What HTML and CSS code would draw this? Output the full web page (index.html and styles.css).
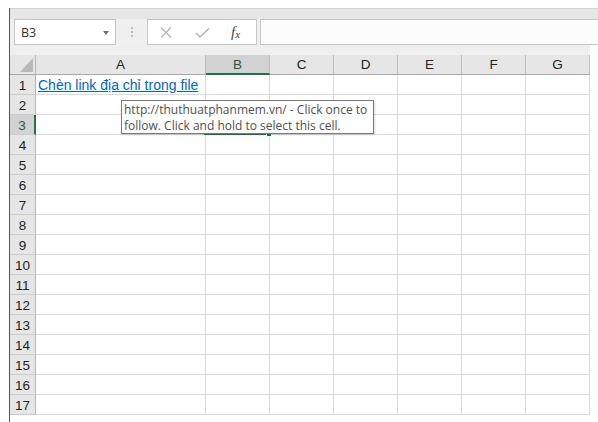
FILE: index.html
```html
<!DOCTYPE html>
<html>
<head>
<meta charset="utf-8">
<link rel="stylesheet" href="styles.css">
</head>
<body>
<div class="window">
  <div class="strip"></div>
  <div class="fbar">
    <div class="namebox"><span class="ref">B3</span><span class="caret"></span></div>
    <div class="grip"><i></i><i></i><i></i></div>
    <div class="fxbox">
      <svg class="ico-x" width="12" height="11" viewBox="0 0 12 11"><path d="M1 0.5 L11 10.5 M11 0.5 L1 10.5" stroke="#b3b3b3" stroke-width="1.3" fill="none"/></svg>
      <svg class="ico-ok" width="15" height="10" viewBox="0 0 15 10"><path d="M1 5 L5 9 L14 0.5" stroke="#b3b3b3" stroke-width="1.4" fill="none"/></svg>
      <span class="fx">f<span class="sub">x</span></span>
    </div>
    <div class="input"></div>
  </div>
  <div class="sheet">
    <div class="band"></div>
    <div class="row head">
      <div class="corner"><svg width="13" height="14" viewBox="0 0 13 14"><path d="M13 0 L13 14 L0 14 Z" fill="#b9b9b9"/></svg></div>
      <div class="ch">A</div><div class="ch on">B</div><div class="ch">C</div><div class="ch">D</div><div class="ch">E</div><div class="ch">F</div><div class="ch">G</div>
    </div>
    <div class="row"><div class="rh">1</div><div class="c"><span class="link">Chèn link địa chỉ trong file</span></div><div class="c"></div><div class="c"></div><div class="c"></div><div class="c"></div><div class="c"></div><div class="c"></div></div>
    <div class="row"><div class="rh">2</div><div class="c"></div><div class="c"></div><div class="c"></div><div class="c"></div><div class="c"></div><div class="c"></div><div class="c"></div></div>
    <div class="row"><div class="rh on">3</div><div class="c"></div><div class="c active"><div class="sel"><span class="handle"></span></div></div><div class="c"></div><div class="c"></div><div class="c"></div><div class="c"></div><div class="c"></div></div>
    <div class="row"><div class="rh">4</div><div class="c"></div><div class="c"></div><div class="c"></div><div class="c"></div><div class="c"></div><div class="c"></div><div class="c"></div></div>
    <div class="row"><div class="rh">5</div><div class="c"></div><div class="c"></div><div class="c"></div><div class="c"></div><div class="c"></div><div class="c"></div><div class="c"></div></div>
    <div class="row"><div class="rh">6</div><div class="c"></div><div class="c"></div><div class="c"></div><div class="c"></div><div class="c"></div><div class="c"></div><div class="c"></div></div>
    <div class="row"><div class="rh">7</div><div class="c"></div><div class="c"></div><div class="c"></div><div class="c"></div><div class="c"></div><div class="c"></div><div class="c"></div></div>
    <div class="row"><div class="rh">8</div><div class="c"></div><div class="c"></div><div class="c"></div><div class="c"></div><div class="c"></div><div class="c"></div><div class="c"></div></div>
    <div class="row"><div class="rh">9</div><div class="c"></div><div class="c"></div><div class="c"></div><div class="c"></div><div class="c"></div><div class="c"></div><div class="c"></div></div>
    <div class="row"><div class="rh">10</div><div class="c"></div><div class="c"></div><div class="c"></div><div class="c"></div><div class="c"></div><div class="c"></div><div class="c"></div></div>
    <div class="row"><div class="rh">11</div><div class="c"></div><div class="c"></div><div class="c"></div><div class="c"></div><div class="c"></div><div class="c"></div><div class="c"></div></div>
    <div class="row"><div class="rh">12</div><div class="c"></div><div class="c"></div><div class="c"></div><div class="c"></div><div class="c"></div><div class="c"></div><div class="c"></div></div>
    <div class="row"><div class="rh">13</div><div class="c"></div><div class="c"></div><div class="c"></div><div class="c"></div><div class="c"></div><div class="c"></div><div class="c"></div></div>
    <div class="row"><div class="rh">14</div><div class="c"></div><div class="c"></div><div class="c"></div><div class="c"></div><div class="c"></div><div class="c"></div><div class="c"></div></div>
    <div class="row"><div class="rh">15</div><div class="c"></div><div class="c"></div><div class="c"></div><div class="c"></div><div class="c"></div><div class="c"></div><div class="c"></div></div>
    <div class="row"><div class="rh">16</div><div class="c"></div><div class="c"></div><div class="c"></div><div class="c"></div><div class="c"></div><div class="c"></div><div class="c"></div></div>
    <div class="row"><div class="rh">17</div><div class="c"></div><div class="c"></div><div class="c"></div><div class="c"></div><div class="c"></div><div class="c"></div><div class="c"></div></div>
    <div class="tip">http://thuthuatphanmem.vn/ - Click once to<br>follow. Click and hold to select this cell.</div>
  </div>
</div>
</body>
</html>
```
FILE: styles.css
```css
* { box-sizing: border-box; }
html, body { margin: 0; padding: 0; background: #fff; }
body { font-family: "Liberation Sans", Arial, sans-serif; }

.window {
  margin: 8px 0 0 9px;
  height: 414px;
  border-left: 1px solid #217346;
  overflow: hidden;
}

.strip {
  height: 11px;
  background: #e6e6e6;
  border-top: 1px solid #d3d3d3;
}

.fbar {
  height: 26px;
  background: #f0f0f0;
  display: flex;
  padding-left: 4px;
}

.namebox {
  width: 102px;
  height: 26px;
  border: 1px solid #c6c6c6;
  background: #fff;
  display: flex;
  align-items: center;
  justify-content: space-between;
  padding: 0 6px 0 6px;
}
.ref {
  font-family: "Open Sans", sans-serif;
  font-size: 12.5px;
  color: #333;
}
.caret {
  width: 0; height: 0;
  border-left: 3.5px solid transparent;
  border-right: 3.5px solid transparent;
  border-top: 4px solid #6f6f6f;
  margin-top: 1px;
}

.grip {
  width: 31px;
  display: flex;
  flex-direction: column;
  align-items: center;
  justify-content: center;
  gap: 2px;
}
.grip i {
  display: block;
  width: 2px; height: 2px;
  background: #b9b9b9;
}

.fxbox {
  width: 110px;
  height: 26px;
  border: 1px solid #c6c6c6;
  background: #fff;
  display: flex;
  align-items: center;
  padding-left: 12px;
}
.ico-x { margin-right: 23px; }
.ico-ok { margin-right: 21px; margin-top: 2px; }
.fx {
  font-family: "Liberation Serif", serif;
  font-style: italic;
  font-size: 15px;
  color: #444;
  line-height: 1;
}
.fx .sub { font-size: 11px; position: relative; top: 1px; }

.input {
  flex: 1;
  margin-left: 3px;
  height: 26px;
  border: 1px solid #c6c6c6;
  border-right: none;
  background: #fcfcfc;
}

.sheet {
  position: relative;
  width: 580px;
}
.band {
  height: 10px;
  background: #efefef;
}

.row {
  display: grid;
  grid-template-columns: 26px 170px repeat(6, 64px);
  grid-template-rows: 20px;
  height: 20px;
}

.head > div {
  background: #e6e6e6;
  border-right: 1px solid #bdbdbd;
  border-bottom: 1px solid #a9a9a9;
  text-align: center;
  font-size: 13.5px;
  line-height: 19px;
  color: #222;
}
.head .corner {
  display: flex;
  align-items: flex-end;
  justify-content: flex-end;
  padding: 0 2px 2px 0;
  border-right-color: #b5b5b5;
}
.head .corner svg { display: block; }
.head .ch.on {
  background: #d2d2d2;
  color: #1f5a3c;
  border-bottom: 2px solid #217346;
}

.rh {
  background: #e6e6e6;
  border-right: 1px solid #b5b5b5;
  border-bottom: 1px solid #cbcbcb;
  text-align: center;
  font-size: 13.5px;
  line-height: 19px;
  padding-top: 1px;
  color: #1e1e1e;
  overflow: hidden;
}
.rh.on {
  background: #d2d2d2;
  color: #2a5a45;
  border-right: 2px solid #217346;
}

.c {
  border-right: 1px solid #dadada;
  border-bottom: 1px solid #dadada;
  background: #fff;
  white-space: nowrap;
  padding-left: 2px;
  line-height: 19px;
}
.c.active { position: relative; }

.link {
  font-size: 14px;
  color: #0563c1;
  text-decoration: underline;
}

.sel {
  position: absolute;
  left: -2px;
  top: -2px;
  width: 66px;
  height: 22px;
  border: 2px solid #217346;
}
.handle {
  position: absolute;
  right: -4px;
  bottom: -4px;
  width: 6px;
  height: 6px;
  background: #217346;
  border: 1px solid #fff;
}

.tip {
  position: absolute;
  left: 111px;
  top: 55px;
  width: 253px;
  height: 34px;
  background: #fff;
  border: 1px solid #7a7a7a;
  box-shadow: 1px 1px 2px rgba(0,0,0,0.15);
  padding: 1px 0 0 2px;
  font-family: "Open Sans", sans-serif;
  font-size: 12px;
  line-height: 16px;
  color: #505050;
  white-space: nowrap;
}
```
